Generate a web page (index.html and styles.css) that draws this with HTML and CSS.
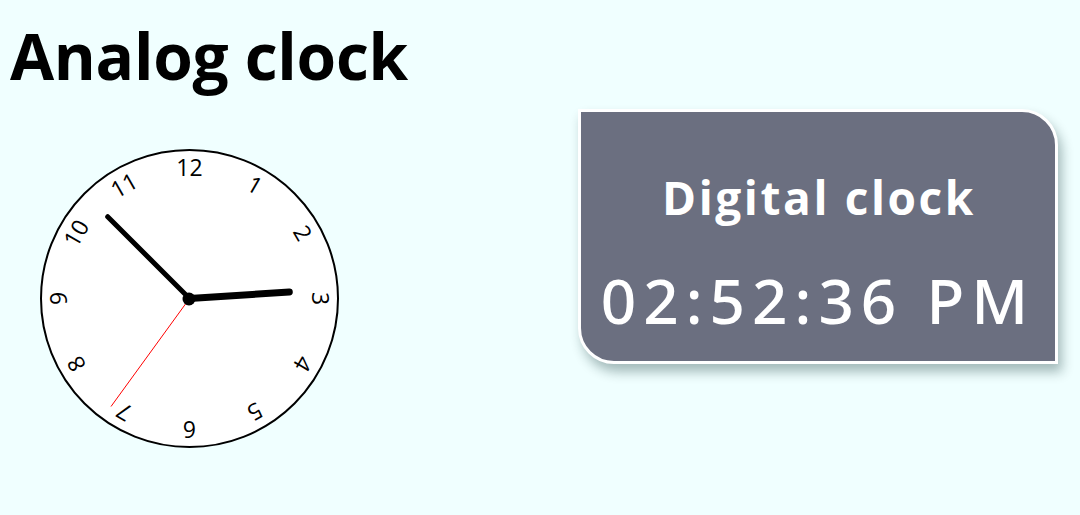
FILE: index.html
```html
<!DOCTYPE html>
<html lang="en">
<head>
<meta charset="utf-8">
<title>Clocks</title>
<link rel="stylesheet" href="styles.css">
</head>
<body>
<main class="page">
  <section class="analog">
    <h1 class="title">Analog clock</h1>
    <svg class="clock" width="303" height="303" viewBox="0 0 303 303">
      <circle cx="151.5" cy="151.5" r="148.5" fill="#ffffff" stroke="#000" stroke-width="2"/>
      <g class="numbers" text-anchor="middle">
        <text x="151.5" y="29" transform="rotate(30 151.5 151.5)">1</text>
        <text x="151.5" y="29" transform="rotate(60 151.5 151.5)">2</text>
        <text x="151.5" y="29" transform="rotate(90 151.5 151.5)">3</text>
        <text x="151.5" y="29" transform="rotate(120 151.5 151.5)">4</text>
        <text x="151.5" y="29" transform="rotate(150 151.5 151.5)">5</text>
        <text x="151.5" y="29" transform="rotate(180 151.5 151.5)">6</text>
        <text x="151.5" y="29" transform="rotate(210 151.5 151.5)">7</text>
        <text x="151.5" y="29" transform="rotate(240 151.5 151.5)">8</text>
        <text x="151.5" y="29" transform="rotate(270 151.5 151.5)">9</text>
        <text x="151.5" y="29" transform="rotate(300 151.5 151.5)">10</text>
        <text x="151.5" y="29" transform="rotate(330 151.5 151.5)">11</text>
        <text x="151.5" y="29">12</text>
      </g>
      <line class="hand hand-hour" x1="151.5" y1="151.5" x2="251.3" y2="145"/>
      <line class="hand hand-minute" x1="151.5" y1="151.5" x2="69.7" y2="69.7"/>
      <line class="hand hand-second" x1="151.5" y1="151.5" x2="73" y2="259.5"/>
      <circle cx="151" cy="152" r="6.5" fill="#000"/>
    </svg>
  </section>
  <section class="digital">
    <h2 class="digital-title">Digital clock</h2>
    <div class="digital-time">02:52:36 PM</div>
  </section>
</main>
</body>
</html>
```

FILE: styles.css
```css
html, body {
  margin: 0;
  padding: 0;
  background: #f0ffff;
}

.page {
  display: flex;
  justify-content: space-between;
  align-items: flex-start;
  padding: 0 22px 0 10px;
}

.analog {
  display: flex;
  flex-direction: column;
}

.title {
  margin: 18px 0 0 0;
  font-family: "Open Sans", "Noto Sans", sans-serif;
  font-weight: 700;
  font-size: 64px;
  line-height: 76px;
  letter-spacing: -0.3px;
  color: #000;
}

.clock {
  display: block;
  margin: 53px 0 0 28px;
}

.numbers text {
  font-family: "Open Sans", "Noto Sans", sans-serif;
  font-size: 23px;
  fill: #000;
}

.hand {
  stroke: #000;
  stroke-linecap: round;
}

.hand-hour {
  stroke-width: 7;
}

.hand-minute {
  stroke-width: 5;
}

.hand-second {
  stroke: #ff0000;
  stroke-width: 1;
  stroke-linecap: butt;
}

.digital {
  box-sizing: border-box;
  width: 480px;
  height: 255px;
  margin-top: 109px;
  padding-top: 57px;
  display: flex;
  flex-direction: column;
  align-items: center;
  background: #6b6f80;
  border: 3px solid #ffffff;
  border-radius: 0 36px 0 36px;
  box-shadow: 4px 8px 12px rgba(0, 40, 40, 0.32);
  color: #ffffff;
}

.digital-title {
  margin: 0;
  padding-left: 2px;
  font-family: "Open Sans", "Noto Sans", sans-serif;
  font-weight: 700;
  font-size: 46px;
  line-height: 56px;
  letter-spacing: 2.6px;
}

.digital-time {
  margin-top: 39px;
  font-family: "Comic Sans MS", "Noto Sans", sans-serif;
  font-weight: 500;
  font-size: 62px;
  line-height: 72px;
  letter-spacing: 7px;
}
```
